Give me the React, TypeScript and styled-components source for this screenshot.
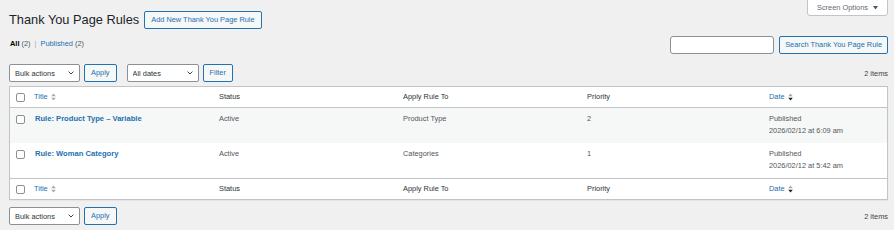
import { FC } from 'react'
import styled, { createGlobalStyle } from 'styled-components'

const GlobalStyle = createGlobalStyle`
  html, body {
    margin: 0;
    padding: 0;
    background: #f0f0f1;
  }
  body {
    font-family: "Liberation Sans", Arial, sans-serif;
    font-size: 7.4px;
    color: #3c434a;
  }
`

const Page = styled.div`
  padding: 0 6px 0 9px;
`

const Header = styled.div`
  display: flex;
  justify-content: space-between;
  align-items: flex-start;
  height: 29px;
`

const TitleRow = styled.div`
  display: flex;
  align-items: center;
  gap: 5px;
  margin-top: 11px;
`

const Heading = styled.h1`
  margin: 0;
  font-size: 12.8px;
  font-weight: 400;
  line-height: 18px;
  color: #1d2327;
`

const ScreenOptions = styled.button`
  display: flex;
  align-items: center;
  gap: 5px;
  height: 17px;
  width: 81px;
  margin-top: -1px;
  padding: 0 0 0 9px;
  background: #fff;
  border: 1px solid #c3c4c7;
  border-radius: 0 0 3px 3px;
  font-family: inherit;
  font-size: 7.4px;
  color: #646970;
`

const Button = styled.button<{ $pad?: number }>`
  height: 18px;
  padding: 0 ${({ $pad }) => $pad ?? 6}px;
  background: #f6f7f7;
  border: 1px solid #2271b1;
  border-radius: 2px;
  color: #2271b1;
  font-family: inherit;
  font-size: 7.4px;
  line-height: 16px;
  white-space: nowrap;
`

const SubRow = styled.div`
  display: flex;
  justify-content: space-between;
  align-items: center;
  margin-top: 7px;
  height: 18px;
`

const Views = styled.ul`
  display: flex;
  align-items: center;
  gap: 4px;
  margin: -4px 0 0 1px;
  padding: 0;
  list-style: none;
  font-size: 7.4px;
`

const ViewLink = styled.a<{ $current?: boolean }>`
  color: ${({ $current }) => ($current ? '#000' : '#2271b1')};
  font-weight: ${({ $current }) => ($current ? 700 : 400)};
  text-decoration: none;
`

const Count = styled.span`
  color: #50575e;
  font-weight: 400;
`

const Sep = styled.li`
  color: #a7aaad;
`

const SearchBox = styled.div`
  display: flex;
  gap: 5px;
`

const SearchInput = styled.input`
  box-sizing: border-box;
  width: 104px;
  height: 18px;
  border: 1px solid #8c8f94;
  border-radius: 3px;
  background: #fff;
`

const TableNav = styled.div<{ $top?: boolean }>`
  display: flex;
  align-items: center;
  justify-content: space-between;
  height: 18px;
  margin: ${({ $top }) => ($top ? '10px 0 4px' : '7px 0 0')};
`

const Actions = styled.div`
  display: flex;
  align-items: center;
  gap: 10px;
`

const ActionGroup = styled.div`
  display: flex;
  gap: 4px;
`

const SelectWrap = styled.div<{ $w: number }>`
  position: relative;
  width: ${({ $w }) => $w}px;
  height: 18px;
`

const Select = styled.select`
  appearance: none;
  box-sizing: border-box;
  width: 100%;
  height: 18px;
  margin: 0;
  padding: 0 16px 0 5px;
  border: 1px solid #8c8f94;
  border-radius: 2px;
  background: #fff;
  color: #2c3338;
  font-family: inherit;
  font-size: 7.4px;
`

const Chevron = styled.svg`
  position: absolute;
  right: 6px;
  top: 7px;
  pointer-events: none;
`

const ItemCount = styled.span`
  color: #3c434a;
  font-size: 7.4px;
`

const Table = styled.div`
  background: #fff;
  border: 1px solid #c3c4c7;
  box-shadow: 0 1px 1px rgba(0, 0, 0, 0.04);
`

const Row = styled.div<{ $kind: 'head' | 'striped' | 'plain' | 'foot' }>`
  display: grid;
  grid-template-columns: 18px 185px 184px 184px 182px 1fr;
  background: ${({ $kind }) => ($kind === 'striped' ? '#f6f7f7' : '#fff')};
  border-bottom: ${({ $kind }) => ($kind === 'head' ? '1px solid #c3c4c7' : 'none')};
  border-top: ${({ $kind }) => ($kind === 'foot' ? '1px solid #c3c4c7' : 'none')};
`

const Cell = styled.div<{ $head?: boolean }>`
  padding: ${({ $head }) => ($head ? '4px 6px' : '5px 6px 6px')};
  line-height: 12px;
  font-size: 7.4px;
  color: ${({ $head }) => ($head ? '#2c3338' : '#50575e')};
`

const CheckCell = styled.div<{ $head?: boolean }>`
  padding: ${({ $head }) => ($head ? '6px 0 0 6px' : '7px 0 0 6px')};
`

const Check = styled.span`
  display: block;
  box-sizing: border-box;
  width: 9px;
  height: 9px;
  border: 1px solid #8c8f94;
  border-radius: 2px;
  background: #fff;
`

const SortLink = styled.a`
  display: inline-flex;
  align-items: center;
  gap: 3px;
  color: #2271b1;
  text-decoration: none;
`

const RowTitle = styled.a`
  color: #2271b1;
  font-weight: 700;
  font-size: 7.6px;
  text-decoration: none;
  padding-left: 1px;
`

const SortIcon: FC<{ active?: boolean }> = ({ active }) => (
  <svg width="5" height="8" viewBox="0 0 5 8">
    <path d="M2.5 0.5 L4.8 3.3 L0.2 3.3 Z" fill="#a7aaad" />
    <path d="M2.5 7.5 L4.8 4.7 L0.2 4.7 Z" fill={active ? '#1d2327' : '#a7aaad'} />
  </svg>
)

const Dropdown: FC<{ label: string; width: number }> = ({ label, width }) => (
  <SelectWrap $w={width}>
    <Select defaultValue={label}>
      <option>{label}</option>
    </Select>
    <Chevron width="6" height="4" viewBox="0 0 6 4">
      <path d="M0.6 0.6 L3 3 L5.4 0.6" fill="none" stroke="#3c434a" strokeWidth="1" />
    </Chevron>
  </SelectWrap>
)

const rules = [
  { title: 'Rule: Product Type – Variable', status: 'Active', applyTo: 'Product Type', priority: '2', time: '6:09 am' },
  { title: 'Rule: Woman Category', status: 'Active', applyTo: 'Categories', priority: '1', time: '5:42 am' },
]

const HeaderCells: FC = () => (
  <>
    <CheckCell $head><Check /></CheckCell>
    <Cell $head><SortLink>Title <SortIcon /></SortLink></Cell>
    <Cell $head>Status</Cell>
    <Cell $head>Apply Rule To</Cell>
    <Cell $head>Priority</Cell>
    <Cell $head><SortLink>Date <SortIcon active /></SortLink></Cell>
  </>
)

const App: FC = () => {
  return (
    <Page>
      <GlobalStyle />
      <Header>
        <TitleRow>
          <Heading>Thank You Page Rules</Heading>
          <Button>Add New Thank You Page Rule</Button>
        </TitleRow>
        <ScreenOptions>
          Screen Options
          <svg width="5" height="4" viewBox="0 0 5 4">
            <path d="M0 0 L5 0 L2.5 3.5 Z" fill="#50575e" />
          </svg>
        </ScreenOptions>
      </Header>

      <SubRow>
        <Views>
          <li><ViewLink $current>All <Count>(2)</Count></ViewLink></li>
          <Sep>|</Sep>
          <li><ViewLink>Published <Count>(2)</Count></ViewLink></li>
        </Views>
        <SearchBox>
          <SearchInput type="search" />
          <Button $pad={5}>Search Thank You Page Rule</Button>
        </SearchBox>
      </SubRow>

      <TableNav $top>
        <Actions>
          <ActionGroup>
            <Dropdown label="Bulk actions" width={71} />
            <Button>Apply</Button>
          </ActionGroup>
          <ActionGroup>
            <Dropdown label="All dates" width={72} />
            <Button>Filter</Button>
          </ActionGroup>
        </Actions>
        <ItemCount>2 items</ItemCount>
      </TableNav>

      <Table>
        <Row $kind="head"><HeaderCells /></Row>
        {rules.map((rule, i) => (
          <Row key={rule.title} $kind={i % 2 === 0 ? 'striped' : 'plain'}>
            <CheckCell><Check /></CheckCell>
            <Cell><RowTitle>{rule.title}</RowTitle></Cell>
            <Cell>{rule.status}</Cell>
            <Cell>{rule.applyTo}</Cell>
            <Cell>{rule.priority}</Cell>
            <Cell>
              Published
              <br />
              2026/02/12 at {rule.time}
            </Cell>
          </Row>
        ))}
        <Row $kind="foot"><HeaderCells /></Row>
      </Table>

      <TableNav>
        <Actions>
          <ActionGroup>
            <Dropdown label="Bulk actions" width={71} />
            <Button>Apply</Button>
          </ActionGroup>
        </Actions>
        <ItemCount>2 items</ItemCount>
      </TableNav>
    </Page>
  )
}

export default App
